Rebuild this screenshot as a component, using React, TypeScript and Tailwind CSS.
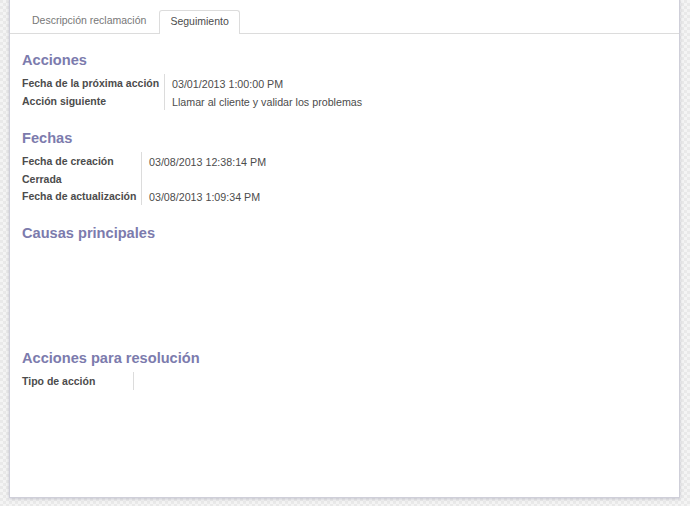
import React from "react";

const font = { fontFamily: '"Liberation Sans", Arial, Helvetica, sans-serif' };

function Row({ label, value, labelW }: { label: string; value?: string; labelW: string }) {
  return (
    <div className="flex">
      <div className={`${labelW} shrink-0 whitespace-nowrap border-r border-[#dcdcdc] pr-2 text-[10.5px] font-bold leading-[18px] text-[#4c4c4c]`}>{label}</div>
      <div className="whitespace-nowrap pl-[7px] pt-[2px] text-[10.7px] leading-[16px] text-[#4c4c4c]">{value ?? ""}</div>
    </div>
  );
}

function Heading({ children }: { children: React.ReactNode }) {
  return <h2 className="whitespace-nowrap text-[14.6px] font-bold leading-[20px] text-[#7c7bad]">{children}</h2>;
}

export default function App() {
  return (
    <div
      style={font}
      className="h-[506px] w-[690px] overflow-hidden bg-[#efefef] bg-[repeating-conic-gradient(#f4f4f4_0%_25%,#e9e9e9_0%_50%)] bg-[length:6px_6px] pl-[9px]"
    >
      <div className="h-[498px] w-[671px] border-b border-l border-r border-[#cfcfd9] bg-white shadow-[0_1px_3px_rgba(120,120,150,0.35)]">
        <div className="flex h-[34px] items-end border-b border-[#dcdcdc] pl-[12px]">
          <div className="mr-[3px] flex h-[23px] items-center whitespace-nowrap px-[10px] pb-[1px] text-[10.5px] text-[#777]">Descripción reclamación</div>
          <div className="-mb-px flex h-[24px] items-center whitespace-nowrap rounded-t-[3px] border border-b-0 border-[#dcdcdc] bg-white px-[10px] pb-[1px] text-[10.5px] text-[#4c4c4c]">
            Seguimiento
          </div>
        </div>
        <div className="px-[12px]">
          <div className="mt-[16px]">
            <Heading>Acciones</Heading>
            <div className="mt-[4px] flex flex-col">
              <Row label="Fecha de la próxima acción" value="03/01/2013 1:00:00 PM" labelW="w-[143px]" />
              <Row label="Acción siguiente" value="Llamar al cliente y validar los problemas" labelW="w-[143px]" />
            </div>
          </div>
          <div className="mt-[18px]">
            <Heading>Fechas</Heading>
            <div className="mt-[4px] flex flex-col">
              <div className="flex flex-col [&>div]:h-[17.5px]">
                <Row label="Fecha de creación" value="03/08/2013 12:38:14 PM" labelW="w-[120px]" />
                <Row label="Cerrada" labelW="w-[120px]" />
                <Row label="Fecha de actualización" value="03/08/2013 1:09:34 PM" labelW="w-[120px]" />
              </div>
            </div>
          </div>
          <div className="mt-[18px]">
            <Heading>Causas principales</Heading>
          </div>
          <div className="mt-[105px]">
            <Heading>Acciones para resolución</Heading>
            <div className="mt-[4px] flex flex-col">
              <Row label="Tipo de acción" labelW="w-[112px]" />
            </div>
          </div>
        </div>
      </div>
    </div>
  );
}
